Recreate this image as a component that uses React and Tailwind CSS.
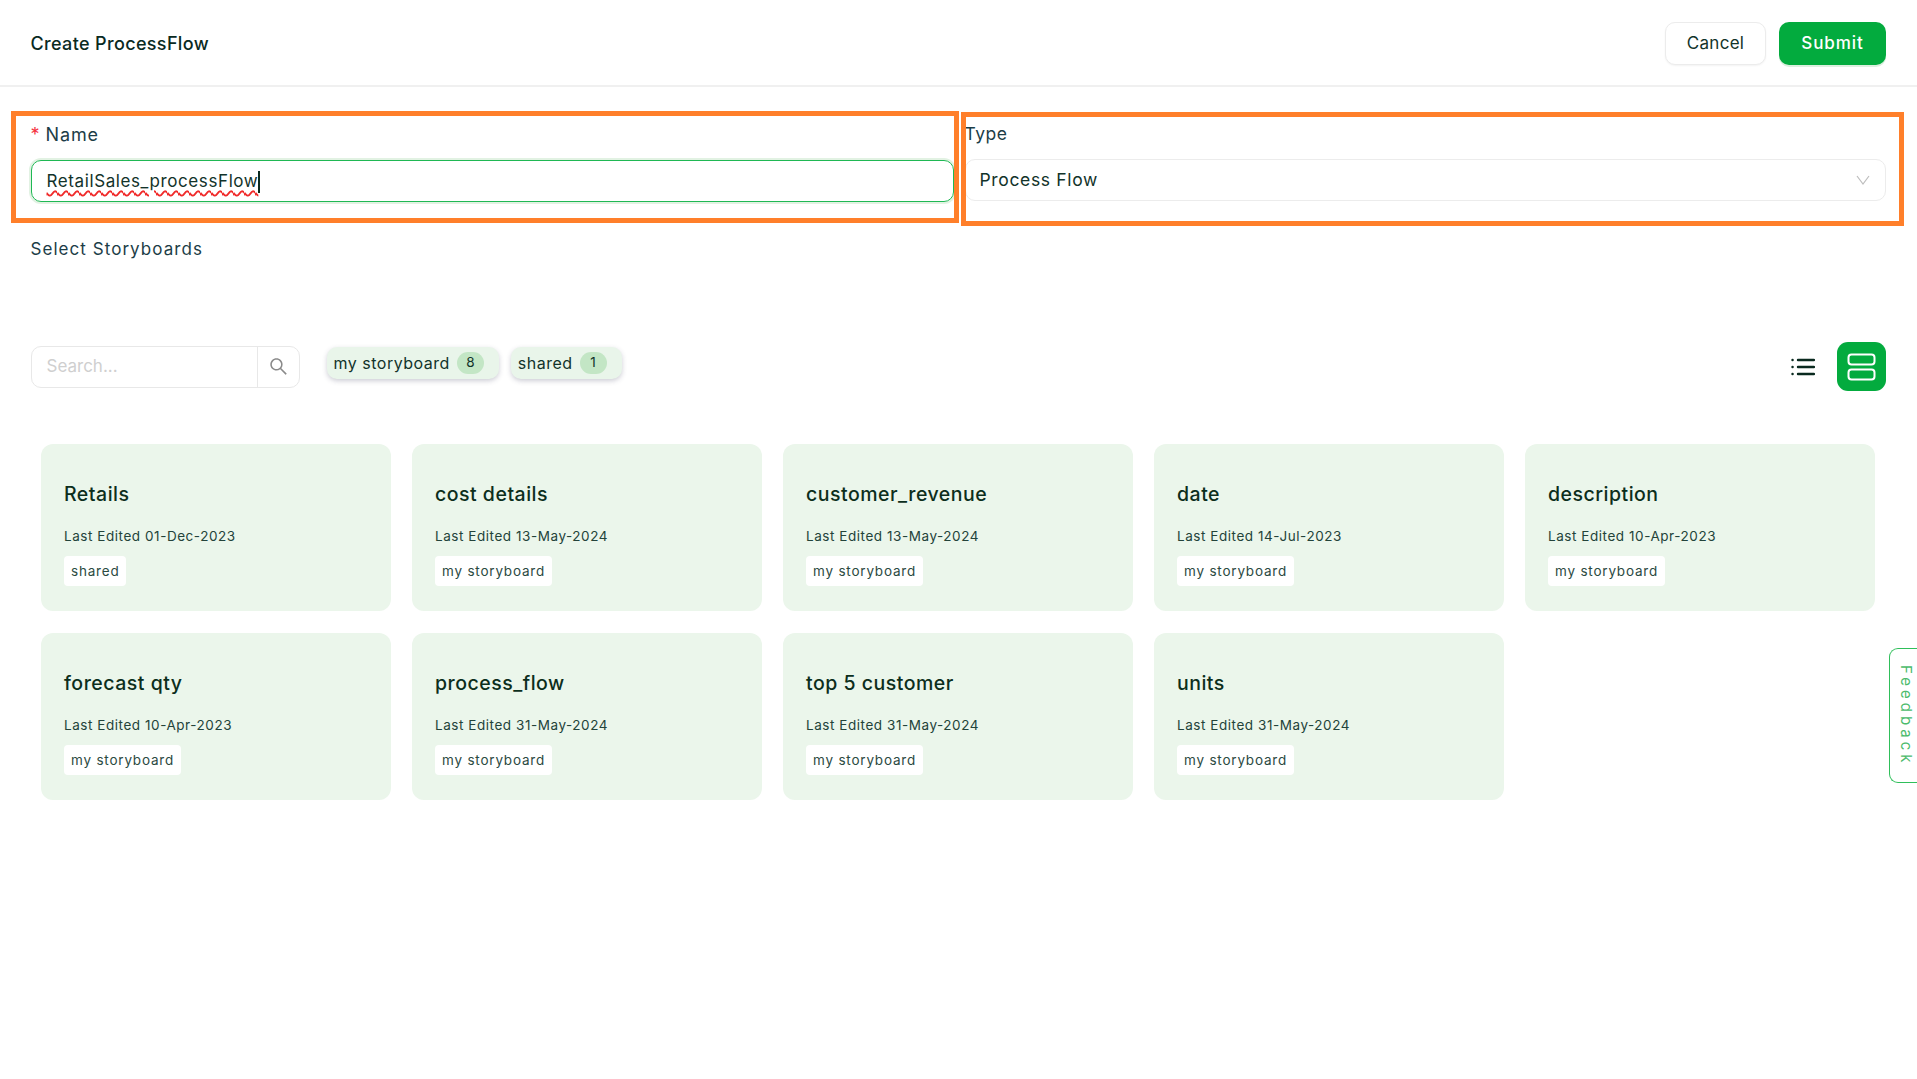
import { AiOutlineSearch } from "react-icons/ai";

const font = "font-['Inter','Liberation_Sans',sans-serif]";

const cards = [
  { name: "Retails", date: "01-Dec-2023", tag: "shared" },
  { name: "cost details", date: "13-May-2024", tag: "my storyboard" },
  { name: "customer_revenue", date: "13-May-2024", tag: "my storyboard" },
  { name: "date", date: "14-Jul-2023", tag: "my storyboard" },
  { name: "description", date: "10-Apr-2023", tag: "my storyboard" },
  { name: "forecast qty", date: "10-Apr-2023", tag: "my storyboard" },
  { name: "process_flow", date: "31-May-2024", tag: "my storyboard" },
  { name: "top 5 customer", date: "31-May-2024", tag: "my storyboard" },
  { name: "units", date: "31-May-2024", tag: "my storyboard" },
];

function Chip({ label, count }) {
  return (
    <div className="flex items-center h-[32px] pl-[7px] pr-[15px] gap-[7px] rounded-[10px] bg-[#e9f5ea] shadow-[0_2px_5px_rgba(60,60,90,0.25)]">
      <span className="text-[16px] tracking-[0.5px] text-[#12332a]">{label}</span>
      <span className="flex items-center justify-center w-[27px] h-[22px] rounded-full bg-[#c3e6c5] text-[13.5px] text-[#12332a]">
        {count}
      </span>
    </div>
  );
}

function Card({ name, date, tag }) {
  return (
    <div className="h-[167px] rounded-[12px] bg-[#ebf6eb] px-[23px] pt-[37px]">
      <div className="text-[19.5px] leading-[26px] font-medium tracking-[0.5px] text-[#0c2e1c]">{name}</div>
      <div className="mt-[20px] text-[13.5px] leading-[18px] tracking-[0.55px] text-[#23433a]">Last Edited {date}</div>
      <span className="inline-flex items-center mt-[11px] h-[30px] px-[7px] rounded-[4px] bg-white text-[13.5px] tracking-[0.8px] text-[#2b4a42]">
        {tag}
      </span>
    </div>
  );
}

export default function App() {
  return (
    <div className={`relative h-[1079px] overflow-hidden bg-white ${font}`}>
      <header className="flex items-center justify-between h-[87px] pt-[2px] pl-[30.5px] pr-[31px] border-b-2 border-[#f0f0f0]">
        <h1 className="text-[18px] font-medium tracking-[0.35px] text-[#0a2a1f]">Create ProcessFlow</h1>
        <div className="flex gap-[13px]">
          <button className="h-[43px] w-[101px] rounded-[10px] border border-[#ececec] bg-white text-[17px] tracking-[0.3px] text-[#12332a] shadow-[0_1px_2px_rgba(0,0,0,0.05)]">
            Cancel
          </button>
          <button className="h-[43px] w-[107px] rounded-[10px] bg-[#03ab3e] text-[17px] font-medium tracking-[0.9px] text-white shadow-[0_2px_0_#dcefdf]">
            Submit
          </button>
        </div>
      </header>

      <div className="pl-[30.5px] pr-[31px]">
        <div className="flex gap-[11px] pt-[36px]">
          <div className="w-[923px]">
            <label className="flex gap-[5px] h-[22px] items-center text-[18px] tracking-[0.9px] text-[#1c3d47]">
              <span className="text-[#f5333f]">*</span>
              Name
            </label>
            <div className="flex items-center mt-[15px] h-[42px] px-[15px] pt-[1px] rounded-[10px] border-[1.5px] border-[#1fb854] shadow-[0_0_0_2px_#e2f2e3] text-[17px] tracking-[0.6px] text-[#12332a]">
              <span className="underline decoration-wavy decoration-[#f02a2a] decoration-[1.5px] underline-offset-[3px]">RetailSales_processFlow</span>
              <span className="w-[2px] h-[22px] bg-[#0a2a1f]" />
            </div>
          </div>
          <div className="flex-1">
            <label className="flex h-[22px] items-center text-[17.5px] tracking-[0.5px] text-[#1c3d47]">Type</label>
            <div className="flex items-center justify-between mt-[14px] h-[42px] pl-[14px] pr-[15px] rounded-[10px] border border-[#ececec] text-[17.5px] tracking-[0.65px] text-[#12332a]">
              Process Flow
              <svg width="14" height="10" viewBox="0 0 14 10" fill="none" stroke="#bdbdbd" strokeWidth="1.2">
                <path d="M1 1l6 8 6-8" />
              </svg>
            </div>
          </div>
        </div>

        <div className="mt-[37px] h-[22px] flex items-center text-[17px] tracking-[1.05px] text-[#1c3d47]">Select Storyboards</div>

        <div className="flex items-center mt-[81px] h-[49px]">
          <div className="flex h-[42px] w-[269px] rounded-[10px] border border-[#e8e8e8]">
            <div className="flex flex-1 items-center pl-[15px] text-[17px] text-[#cfcfcf]">Search...</div>
            <div className="flex w-[42px] items-center justify-center border-l border-[#e8e8e8]">
              <AiOutlineSearch className="text-[21px] text-[#8a8a8a]" />
            </div>
          </div>
          <div className="flex gap-[12px] ml-[27px] mb-[8px]">
            <Chip label="my storyboard" count="8" />
            <Chip label="shared" count="1" />
          </div>
          <div className="flex items-center gap-[22px] ml-auto">
            <svg width="24" height="18" viewBox="0 0 24 18" fill="none" stroke="#0a2a1f" strokeWidth="2.4" strokeLinecap="round">
              <path d="M7 2h16M7 9h16M7 16h16" />
              <path d="M1.5 2h.1M1.5 9h.1M1.5 16h.1" />
            </svg>
            <div className="flex items-center justify-center w-[49px] h-[49px] rounded-[11px] bg-[#03ab3e]">
              <svg width="29" height="28" viewBox="0 0 29 28" fill="none" stroke="#ffffff" strokeWidth="2">
                <rect x="1.5" y="1.5" width="26" height="10" rx="3" />
                <rect x="1.5" y="16.5" width="26" height="10" rx="3" />
              </svg>
            </div>
          </div>
        </div>
      </div>

      <div className="grid grid-cols-5 gap-x-[21px] gap-y-[22px] mt-[53px] ml-[41px] mr-[42px]">
        {cards.map((c) => (
          <Card key={c.name} {...c} />
        ))}
      </div>

      <div className="absolute right-0 top-[648px] flex h-[135px] w-[28px] items-center justify-center pl-[5px] rounded-l-[9px] border border-r-0 border-[#2fbf5a] bg-white">
        <span className="[writing-mode:vertical-rl] text-[15px] tracking-[4px] text-[#4cbb6c]">Feedback</span>
      </div>

      {/* orange annotation boxes drawn over the form */}
      <div className="absolute left-[11px] top-[111px] w-[948px] h-[112px] border-[5px] border-[#ff7f2a] pointer-events-none" />
      <div className="absolute left-[961px] top-[112px] w-[943px] h-[114px] border-[5px] border-[#ff7f2a] pointer-events-none" />
    </div>
  );
}
